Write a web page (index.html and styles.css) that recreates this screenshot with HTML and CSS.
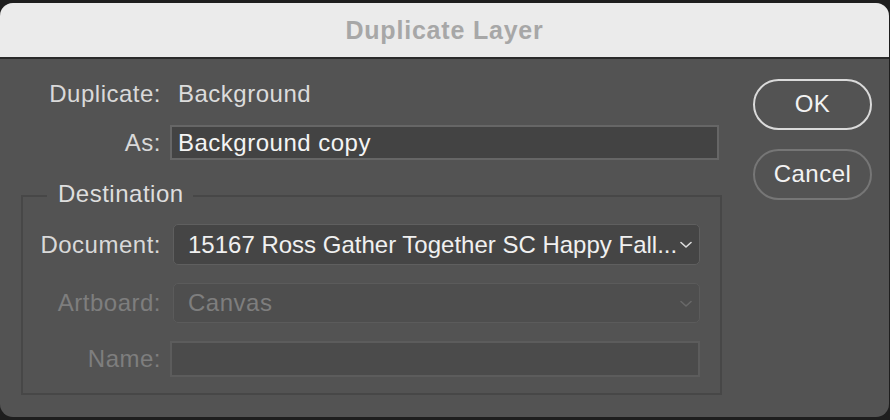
FILE: index.html
```html
<!DOCTYPE html>
<html lang="en">
<head>
<meta charset="utf-8">
<title>Duplicate Layer</title>
<link rel="stylesheet" href="styles.css">
</head>
<body>
<div class="window">
  <div class="titlebar">Duplicate Layer</div>
  <div class="content">
    <div class="form">
      <div class="row row-info">
        <span class="label">Duplicate:</span>
        <span class="value">Background</span>
      </div>
      <div class="row row-as">
        <span class="label">As:</span>
        <div class="field field-as">Background copy</div>
      </div>
      <fieldset class="dest">
        <legend class="dest-legend">Destination</legend>
        <div class="row row-doc">
          <span class="label">Document:</span>
          <div class="select">
            <span class="select-text doc-text">15167 Ross Gather Together SC Happy Fall...</span>
            <svg class="chev" width="12" height="8" viewBox="0 0 12 8"><path d="M1 1.5 L6 6 L11 1.5" fill="none" stroke="currentColor" stroke-width="1.6" stroke-linecap="round" stroke-linejoin="round"/></svg>
          </div>
        </div>
        <div class="row row-art disabled">
          <span class="label">Artboard:</span>
          <div class="select select-disabled">
            <span class="select-text">Canvas</span>
            <svg class="chev" width="12" height="8" viewBox="0 0 12 8"><path d="M1 1.5 L6 6 L11 1.5" fill="none" stroke="currentColor" stroke-width="1.6" stroke-linecap="round" stroke-linejoin="round"/></svg>
          </div>
        </div>
        <div class="row row-name disabled">
          <span class="label">Name:</span>
          <div class="field field-name"></div>
        </div>
      </fieldset>
    </div>
    <div class="buttons">
      <button class="btn btn-ok">OK</button>
      <button class="btn btn-cancel">Cancel</button>
    </div>
  </div>
</div>
</body>
</html>
```

FILE: styles.css
```css
html, body {
  margin: 0;
  padding: 0;
  background: #1e1e1e;
}
body {
  padding-top: 3px;
  font-family: "Liberation Sans", Arial, sans-serif;
  font-size: 24px;
  letter-spacing: 0.5px;
}
.window {
  width: 889px;
  height: 414px;
  background: #535353;
  border-radius: 13px;
  overflow: hidden;
  display: flex;
  flex-direction: column;
}
.titlebar {
  flex: none;
  box-sizing: border-box;
  height: 56px;
  background: #ebebeb;
  border-bottom: 2px solid #2a2a2a;
  display: flex;
  align-items: center;
  justify-content: center;
  font-weight: bold;
  font-size: 25px;
  letter-spacing: 0.8px;
  color: #a7a7a7;
}
.content {
  display: flex;
  padding-top: 20px;
}
.form {
  width: 722px;
  flex: none;
}
.row {
  display: grid;
  grid-template-columns: 161px minmax(0, 1fr);
  column-gap: 9px;
  align-items: center;
}
.label {
  text-align: right;
  color: #d9d9d9;
  line-height: 30px;
  white-space: nowrap;
}
.value {
  color: #dcdcdc;
  padding-left: 8px;
  line-height: 30px;
}
.row-as {
  margin-top: 16px;
}
.field {
  box-sizing: border-box;
  border: 2px solid #666666;
  background: #434343;
  color: #f4f4f4;
  line-height: 31px;
  padding-left: 6px;
  height: 35px;
}
.field-as {
  margin-right: 3px;
}
.dest {
  margin: 19px 0 0 21px;
  padding: 11px 0 16px 0;
  border: 2px solid #474747;
  min-width: 0;
}
.dest-legend {
  margin-left: 24px;
  padding: 0 9px 4px 11px;
  color: #dedede;
  line-height: 30px;
}
.dest .row {
  grid-template-columns: 138px minmax(0, 1fr);
}
.select {
  box-sizing: border-box;
  min-width: 0;
  height: 41px;
  margin-left: 3px;
  margin-right: 20px;
  border: 1.5px solid #5f5f5f;
  border-radius: 5px;
  background: #454545;
  color: #f0f0f0;
  display: flex;
  align-items: center;
  padding: 0 7px 0 14px;
}
.select-text {
  flex: 1;
  min-width: 0;
  white-space: nowrap;
  overflow: hidden;
}
.doc-text {
  letter-spacing: 0;
}
.chev {
  color: #dcdcdc;
  flex: none;
  margin-top: 1px;
}
.row-art {
  margin-top: 18px;
}
.select-disabled {
  height: 40px;
  background: #4e4e4e;
  border-color: #5b5b5b;
  color: #7e7e7e;
}
.select-disabled .chev {
  color: #696969;
}
.disabled .label {
  color: #7e7e7e;
}
.row-name {
  margin-top: 18px;
}
.field-name {
  height: 36px;
  margin-right: 20px;
  background: #4b4b4b;
  border-color: #5c5c5c;
}
.buttons {
  margin-left: 31px;
  display: flex;
  flex-direction: column;
  gap: 19px;
}
.btn {
  width: 119px;
  height: 51px;
  border-radius: 26px;
  background: transparent;
  font-family: "Liberation Sans", Arial, sans-serif;
  font-size: 24px;
  letter-spacing: 0.5px;
  color: #f2f2f2;
  padding: 0 0 2px 0;
  cursor: default;
}
.btn-ok {
  border: 2px solid #dadada;
}
.btn-cancel {
  border: 2px solid #767676;
}
```
